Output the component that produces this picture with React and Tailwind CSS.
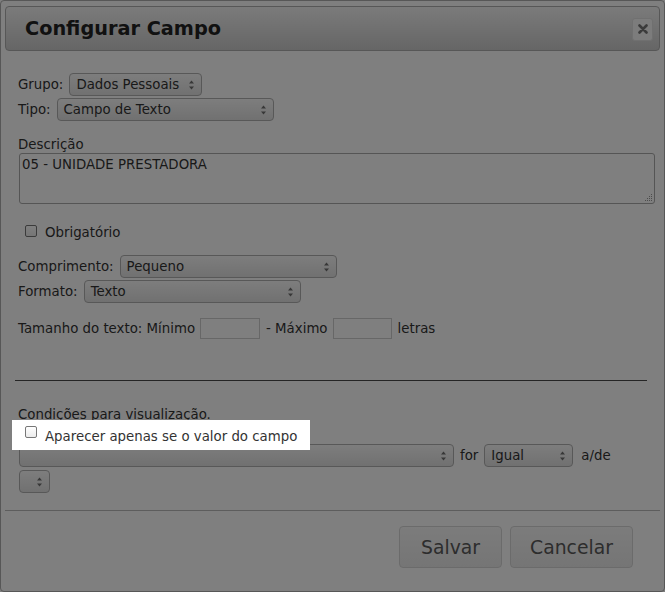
import React from "react";

function Arrows() {
  return (
    <svg className="absolute right-[6px] top-1/2 -translate-y-1/2" width="7" height="12" viewBox="0 0 7 12">
      <path d="M3.5 1.5 L6 4.5 L1 4.5Z" fill="#6e6e6e" />
      <path d="M1 7.5 L6 7.5 L3.5 10.5Z" fill="#6e6e6e" />
    </svg>
  );
}

function Sel({ className, children }) {
  return (
    <div
      className={
        "relative flex items-center h-[23px] shrink-0 rounded-[4px] border border-[#b0b0b0] bg-gradient-to-b from-[#fbfbfb] to-[#e2e2e2] pl-[6px] text-[#333] " +
        className
      }
    >
      <span className="leading-none">{children}</span>
      <Arrows />
    </div>
  );
}

function Check() {
  return (
    <span className="inline-block w-[12px] h-[12px] rounded-[2px] border border-[#777] bg-gradient-to-b from-[#fff] to-[#ececec] shrink-0" />
  );
}

export default function App() {
  return (
    <div className="relative w-[665px] h-[592px] bg-white text-[13.33px] text-[#333] font-['DejaVu_Sans',sans-serif] overflow-hidden">
      <div className="w-[665px] h-[592px] border border-[#aeaeae] rounded-[4px] px-[4px] pt-[5px] flex flex-col">
        {/* Title bar */}
        <div className="h-[45px] shrink-0 border border-[#aeaeae] rounded-[4px] bg-gradient-to-b from-[#f6f6f6] to-[#cccccc] flex items-center justify-between pl-[19px] pr-[6px]">
          <span className="text-[19.3px] font-bold text-[#222] leading-none">Configurar Campo</span>
          <div className="w-[21px] h-[23px] rounded-[3px] border border-[#e0e0e0] bg-[#f8f8f8] flex items-center justify-center mt-[1px]">
            <svg width="10" height="10" viewBox="0 0 10 10">
              <path d="M1.5 1.5 L8.5 8.5 M8.5 1.5 L1.5 8.5" stroke="#767676" strokeWidth="2.6" strokeLinecap="round" />
            </svg>
          </div>
        </div>

        {/* Content */}
        <div className="pl-[13px] flex flex-col">
          <div className="mt-[22px] flex items-center gap-[6px]">
            <span>Grupo:</span>
            <Sel className="w-[133px]">Dados Pessoais</Sel>
          </div>
          <div className="mt-[2px] flex items-center gap-[6px]">
            <span>Tipo:</span>
            <Sel className="w-[217px]">Campo de Texto</Sel>
          </div>
          <div className="mt-[16px] h-[16px] leading-[16px]">Descrição</div>
          <div className="relative ml-[1px] w-[636px] h-[51px] border border-[#aaa] rounded-[3px] bg-white px-[2px] pt-[3px] leading-[16px]">
            05 - UNIDADE PRESTADORA
            <svg className="absolute right-[1px] bottom-[1px]" width="9" height="9" viewBox="0 0 9 9">
              <rect x="7" y="1" width="1" height="1" fill="#999" />
              <rect x="5" y="3" width="1" height="1" fill="#999" />
              <rect x="7" y="3" width="1" height="1" fill="#999" />
              <rect x="3" y="5" width="1" height="1" fill="#999" />
              <rect x="5" y="5" width="1" height="1" fill="#999" />
              <rect x="7" y="5" width="1" height="1" fill="#999" />
              <rect x="1" y="7" width="1" height="1" fill="#999" />
              <rect x="3" y="7" width="1" height="1" fill="#999" />
              <rect x="5" y="7" width="1" height="1" fill="#999" />
              <rect x="7" y="7" width="1" height="1" fill="#999" />
            </svg>
          </div>
          <div className="mt-[21px] h-[16px] flex items-center pl-[7px] gap-[8px]">
            <span className="mt-[-1px]"><Check /></span>
            <span className="leading-[16px]">Obrigatório</span>
          </div>
          <div className="mt-[14px] flex items-center gap-[6px]">
            <span>Comprimento:</span>
            <Sel className="w-[217px]">Pequeno</Sel>
          </div>
          <div className="mt-[2px] flex items-center gap-[6px]">
            <span>Formato:</span>
            <Sel className="w-[217px]">Texto</Sel>
          </div>
          <div className="mt-[15px] flex items-center">
            <span>Tamanho do texto: Mínimo</span>
            <span className="ml-[5px] w-[60px] h-[21px] border border-[#cfcfcf] bg-white" />
            <span className="ml-[6px]">- Máximo</span>
            <span className="ml-[5px] w-[59px] h-[21px] border border-[#cfcfcf] bg-white" />
            <span className="ml-[6px]">letras</span>
          </div>
          <div className="mt-[41px] ml-[-3px] w-[632px] h-[1px] bg-[#4a4a4a]" />
          <div className="mt-[26px] h-[16px] leading-[16px]">Condições para visualização.</div>
          <div className="relative z-20 mt-[-3px] ml-[-6px] w-[298px] h-[30px] bg-white flex items-center pl-[13px] gap-[8px]">
            <span className="mt-[-2px]"><Check /></span>
            <span className="leading-[16px] mt-[3px]">Aparecer apenas se o valor do campo</span>
          </div>
          <div className="mt-[-6px] ml-[1px] flex items-center">
            <Sel className="w-[435px]"></Sel>
            <span className="ml-[6px]">for</span>
            <Sel className="ml-[6px] w-[89px]">Igual</Sel>
            <span className="ml-[8px]">a/de</span>
          </div>
          <div className="mt-[3px] ml-[1px] flex">
            <Sel className="w-[31px]"></Sel>
          </div>
        </div>

        {/* Button pane */}
        <div className="mt-[17px] border-t border-[#bababa] flex justify-end pr-[27px] pt-[15px] gap-[8px]">
          <div className="w-[103px] h-[42px] rounded-[4px] border border-[#d6d6d6] bg-gradient-to-b from-[#f8f8f8] to-[#ebebeb] flex items-center justify-center pt-[2px] text-[18.8px] text-[#5a5a5a]">
            Salvar
          </div>
          <div className="w-[123px] h-[42px] rounded-[4px] border border-[#d6d6d6] bg-gradient-to-b from-[#f8f8f8] to-[#ebebeb] flex items-center justify-center pt-[2px] text-[18.8px] text-[#5a5a5a]">
            Cancelar
          </div>
        </div>
      </div>
      <div className="absolute inset-0 z-10 bg-black/50" />
    </div>
  );
}
